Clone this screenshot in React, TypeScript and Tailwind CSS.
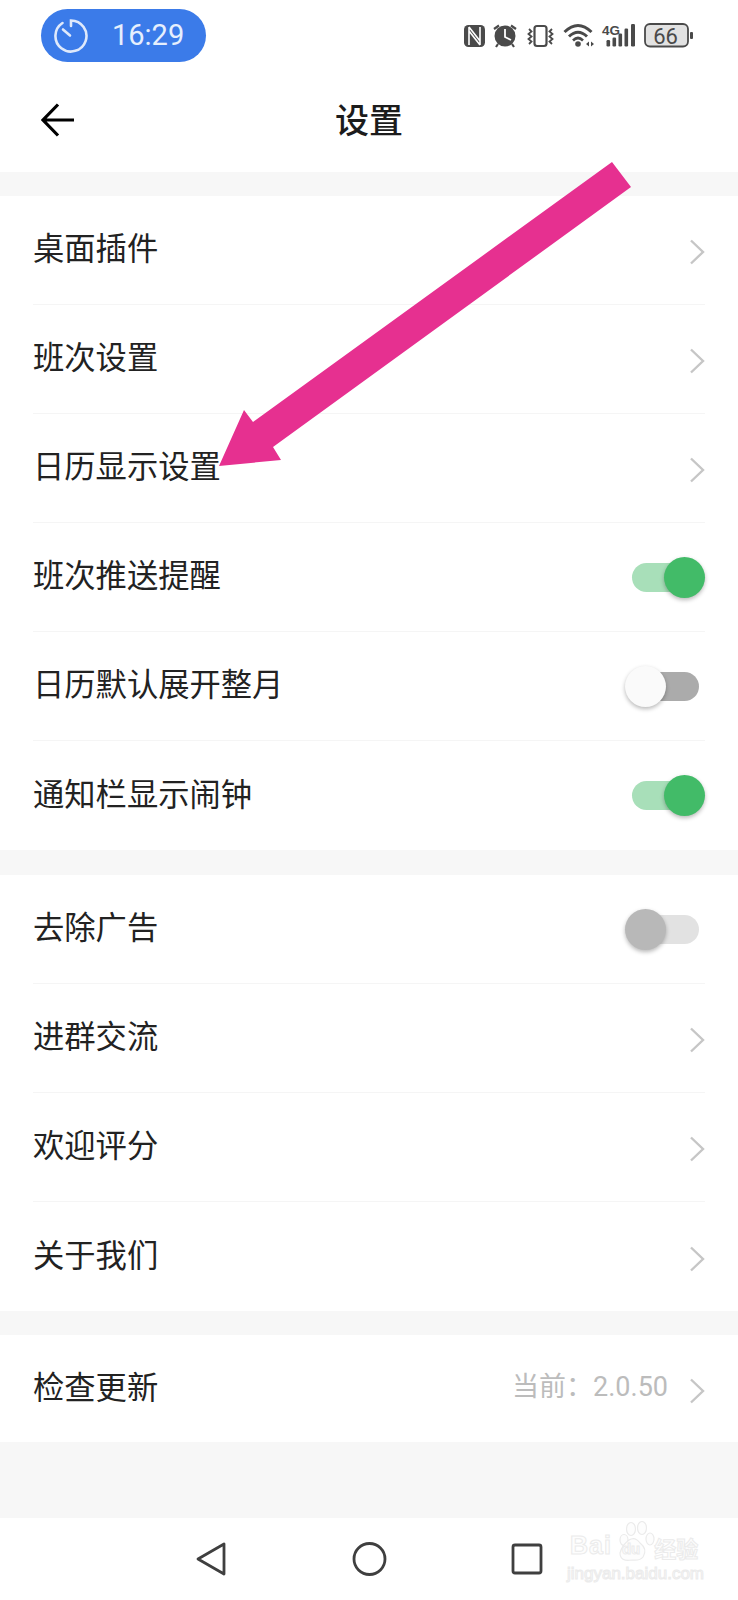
import React from "react";

const FONT = { fontFamily: '"Noto Sans CJK SC", "Noto Sans", sans-serif' };

function Chevron() {
  return (
    <svg width="16" height="26" viewBox="0 0 16 26" className="mt-[4px] shrink-0" fill="none">
      <path d="M2 1.5 L14 13 L2 24.5" stroke="#c6c6c6" strokeWidth="2.4" />
    </svg>
  );
}

function Toggle({ mode }: { mode: "on" | "off" | "disabled" }) {
  const track = mode === "on" ? "bg-[#a8dfb9]" : mode === "off" ? "bg-[#ababab]" : "bg-[#e2e2e2]";
  const knob =
    mode === "on"
      ? "bg-[#42bb68] right-[-6px]"
      : mode === "off"
        ? "bg-[#fafafa] left-[-7px]"
        : "bg-[#b8b8b8] left-[-7px]";
  return (
    <div className={`relative w-[67px] h-[29px] rounded-full ${track}`}>
      <div
        className={`absolute top-[-6px] w-[41px] h-[41px] rounded-full shadow-[0_2px_4px_rgba(0,0,0,0.28)] ${knob}`}
      />
    </div>
  );
}

function Row({
  label,
  last,
  toggle,
  extra,
  h = "h-[109px]",
}: {
  label: string;
  last?: boolean;
  toggle?: "on" | "off" | "disabled";
  extra?: string;
  h?: string;
}) {
  return (
    <div className={`${h} mx-[33px] flex items-center justify-between ${last ? "" : "border-b border-[#f5f5f5]"}`}>
      <span className="text-[31.3px] leading-none text-[#222222] pb-[6px]">{label}</span>
      {toggle ? (
        <div className="mr-[6px]">
          <Toggle mode={toggle} />
        </div>
      ) : (
        <div className="flex items-center">
          {extra && (
            <span
              className="text-[27px] leading-none text-[#bcbcbc] mr-[21px] pb-[3px]"
              style={{ fontFamily: 'Roboto, "Noto Sans CJK SC", sans-serif' }}
            >
              {extra}
            </span>
          )}
          <Chevron />
        </div>
      )}
    </div>
  );
}

function StatusIcons() {
  const c = "#4a4a4a";
  return (
    <svg width="234" height="30" viewBox="464 20 234 30" fill="none">
      {/* NFC */}
      <rect x="464" y="25" width="21" height="22" rx="4.5" fill={c} />
      <path d="M469 27 V45 M480 27 V45 M469 27 L480 41 M469 31 L480 45" stroke="#ffffff" strokeWidth="1.6" fill="none" />
      {/* alarm */}
      <circle cx="505" cy="36" r="10.5" fill={c} />
      <path d="M505 29 V37 L511 40" stroke="#ffffff" strokeWidth="1.8" />
      <path d="M494 29 L499 25.5 M516 29 L511 25.5 M498 44 L496 47 M512 44 L514 47" stroke={c} strokeWidth="2.2" />
      {/* vibrate */}
      <rect x="534.5" y="26" width="12" height="20" rx="2.5" stroke={c} strokeWidth="2.2" />
      <path d="M529 29 L531.5 31.5 L528.5 34 L531.5 36.5 L528.5 39 L531.5 41.5 L529 44" stroke={c} strokeWidth="1.8" />
      <path d="M552 29 L549.5 31.5 L552.5 34 L549.5 36.5 L552.5 39 L549.5 41.5 L552 44" stroke={c} strokeWidth="1.8" />
      {/* wifi */}
      <path d="M564.5 32 Q578 19 591.5 32" stroke={c} strokeWidth="3" />
      <path d="M569 36.5 Q578 28 587 36.5" stroke={c} strokeWidth="3" />
      <path d="M573 40.5 Q578 35.5 583 40.5" stroke={c} strokeWidth="2.6" />
      <circle cx="578" cy="44" r="2.8" fill={c} />
      <path d="M586 44 L589 41.5 V46.5 Z M594 44 L591 41.5 V46.5 Z" fill={c} />
      {/* 4G + signal */}
      <text x="602" y="35" fontSize="13.5" fontWeight="700" fill={c} fontFamily="'Liberation Sans', sans-serif">4G</text>
      <rect x="606.5" y="40" width="3.6" height="6.5" rx="1.2" fill={c} />
      <rect x="612.5" y="37.5" width="3.6" height="9" rx="1.2" fill={c} />
      <rect x="618.5" y="33.5" width="3.6" height="13" rx="1.2" fill={c} />
      <rect x="624.5" y="28.5" width="3.6" height="18" rx="1.2" fill={c} />
      <rect x="631" y="24" width="4" height="22.5" rx="1.2" fill={c} />
      {/* battery */}
      <rect x="645" y="24" width="43" height="22.5" rx="5" fill="#e2e2e2" stroke={c} strokeWidth="1.8" />
      <rect x="690" y="32" width="3" height="7" rx="1" fill={c} />
      <text x="665.5" y="43.5" textAnchor="middle" fontSize="22" fill={c} fontFamily="Roboto, sans-serif">66</text>
    </svg>
  );
}

function Watermark() {
  const stroke = "[-webkit-text-stroke:1px_#ebebeb] text-[#fdfdfd]";
  return (
    <div
      className="absolute left-[566px] top-[1520px] w-[134px] h-[63px] flex flex-col justify-end"
      style={{ fontFamily: '"Liberation Sans", "Noto Sans CJK SC", sans-serif' }}
    >
      <svg className="absolute left-[52px] top-[1px]" width="38" height="42" viewBox="0 0 38 42" fill="#fdfdfd" stroke="#ebebeb" strokeWidth="1.2">
        <ellipse cx="6" cy="19" rx="4" ry="5.5" />
        <ellipse cx="13" cy="8" rx="4.5" ry="6.5" />
        <ellipse cx="24" cy="7" rx="4.5" ry="6.5" />
        <ellipse cx="32" cy="18" rx="4" ry="6" />
        <path d="M2 32 Q4 24 11 19 Q17 15 22 22 Q30 28 25 36 Q22 40 14 39 Q2 41 2 32 Z" />
      </svg>
      <div className="relative flex items-end pl-[4px]">
        <span className={`text-[25px] font-bold leading-none tracking-[1px] ${stroke}`}>Bai</span>
        <span className={`text-[15px] font-bold leading-none ml-[10px] mb-[2px] ${stroke}`}>du</span>
        <span
          className={`text-[22px] font-bold leading-none ml-[14px] ${stroke}`}
          style={FONT}
        >
          经验
        </span>
      </div>
      <span className={`relative pl-[1px] text-[17px] leading-none mt-[7px] mb-[1px] whitespace-nowrap ${stroke}`}>
        jingyan.baidu.com
      </span>
    </div>
  );
}

export default function App() {
  return (
    <div className="relative w-[738px] h-[1600px] flex flex-col bg-[#f7f7f7] overflow-hidden" style={FONT}>
      {/* header */}
      <div className="bg-white h-[172px] shrink-0">
        <div className="h-[72px] pl-[41px] pr-[40px] pt-[9px] flex items-start justify-between">
          <div className="w-[165px] h-[53px] rounded-full bg-[#3b7be9] flex items-center pl-[11px]">
            <svg width="36" height="37" viewBox="0 0 36 37" fill="none" stroke="#dfe9fb" strokeWidth="2.6">
              <path d="M10.5 6 A15.5 15.5 0 1 0 19 3.5 V9" strokeLinecap="round" />
              <path d="M11 12.5 L18 18.5" strokeLinecap="round" />
            </svg>
            <span
              className="ml-[24px] text-[29px] leading-none text-[#e6effd]"
              style={{ fontFamily: "Roboto, sans-serif" }}
            >
              16:29
            </span>
          </div>
          <div className="mt-[11px]">
            <StatusIcons />
          </div>
        </div>
        <div className="h-[100px] px-[41px] grid grid-cols-[1fr_auto_1fr] items-center">
          <svg width="34" height="34" viewBox="0 0 34 34" fill="none" stroke="#000000" strokeWidth="3.2" className="mb-[4px]">
            <path d="M33 17 H2 M17 1.5 L2 17 L17 32.5" />
          </svg>
          <span className="text-[34px] leading-none font-medium text-[#1c1c1c] pb-[6px]">设置</span>
          <span />
        </div>
      </div>

      {/* section 1 */}
      <div className="bg-white mt-[24px]">
        <Row label="桌面插件" />
        <Row label="班次设置" />
        <Row label="日历显示设置" />
        <Row label="班次推送提醒" toggle="on" />
        <Row label="日历默认展开整月" toggle="off" />
        <Row label="通知栏显示闹钟" toggle="on" last />
      </div>

      {/* section 2 */}
      <div className="bg-white mt-[25px]">
        <Row label="去除广告" toggle="disabled" />
        <Row label="进群交流" />
        <Row label="欢迎评分" />
        <Row label="关于我们" last />
      </div>

      {/* section 3 */}
      <div className="bg-white mt-[24px]">
        <Row label="检查更新" extra="当前：2.0.50" last h="h-[107px]" />
      </div>

      <div className="flex-1" />

      {/* nav bar */}
      <div className="bg-white h-[82px] shrink-0 flex items-start pt-[24px] pl-[196px]">
        <svg width="31" height="34" viewBox="0 0 31 34" fill="none" stroke="#3f3f3f" strokeWidth="2.8" strokeLinejoin="round">
          <path d="M28 2 V32 L2 17 Z" />
        </svg>
        <svg width="35" height="34" viewBox="0 0 35 34" fill="none" stroke="#3f3f3f" strokeWidth="2.8" className="ml-[125px]">
          <ellipse cx="17.5" cy="17" rx="15.5" ry="15.5" />
        </svg>
        <svg width="32" height="32" viewBox="0 0 32 32" fill="none" stroke="#3f3f3f" strokeWidth="2.8" className="ml-[124px] mt-[1px]">
          <rect x="2" y="2" width="28" height="28" rx="2" />
        </svg>
      </div>

      <Watermark />

      {/* annotation arrow */}
      <svg className="absolute left-0 top-0" width="738" height="500" viewBox="0 0 738 500">
        <polygon points="612,162 631,187 273,447 281,460 219,466 244,410 253,422" fill="#e63090" />
      </svg>
    </div>
  );
}
